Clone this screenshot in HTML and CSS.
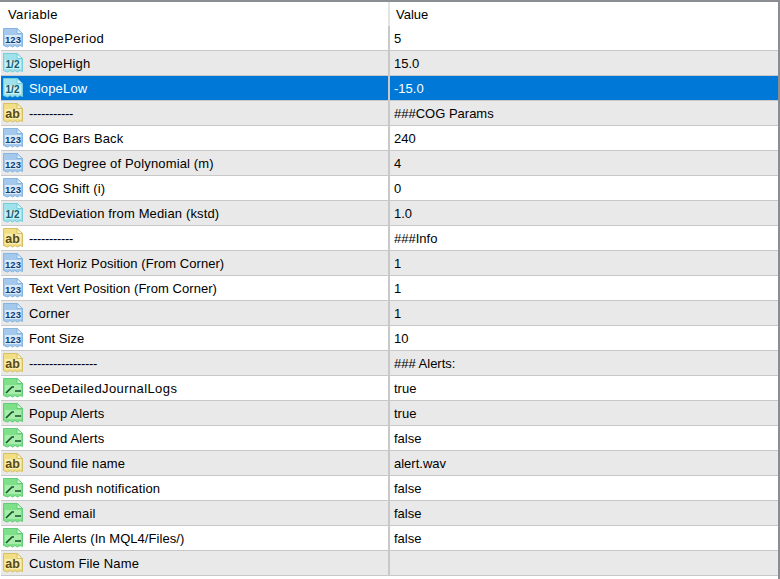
FILE: index.html
```html
<!DOCTYPE html>
<html lang="en">
<head>
<meta charset="utf-8">
<title>Inputs</title>
<link rel="stylesheet" href="styles.css">
</head>
<body>
<svg class="defs" width="0" height="0" aria-hidden="true">
  <defs>
    <symbol id="i-int" viewBox="0 0 22 22">
      <path d="M1.5 1.5H15L20.5 6.5V19.5L18 18.5L15.5 20L13 18.5L10.5 20L8 18.5L5.5 20L1.5 18.5Z" fill="#a4c9ec" stroke="#86b5e0"/>
      <path d="M15 1.5V6.5H20.5Z" fill="#e4f0fb" stroke="#86b5e0"/>
      <rect x="3" y="8" width="16" height="9" fill="#dbeaf8"/>
      <text x="11" y="16" class="glyph int">123</text>
    </symbol>
    <symbol id="i-dbl" viewBox="0 0 22 22">
      <path d="M1.5 1.5H15L20.5 6.5V19.5L18 18.5L15.5 20L13 18.5L10.5 20L8 18.5L5.5 20L1.5 18.5Z" fill="#a0e2ec" stroke="#76cddb"/>
      <path d="M15 1.5V6.5H20.5Z" fill="#e2f7fa" stroke="#76cddb"/>
      <rect x="3" y="8" width="16" height="9" fill="#c8f0f5"/>
      <text x="10.5" y="16" class="glyph dbl">1/2</text>
    </symbol>
    <symbol id="i-str" viewBox="0 0 22 22">
      <path d="M1.5 1.5H15L20.5 6.5V19.5L18 18.5L15.5 20L13 18.5L10.5 20L8 18.5L5.5 20L1.5 18.5Z" fill="#f1de85" stroke="#d6c064"/>
      <path d="M15 1.5V6.5H20.5Z" fill="#fbf4cf" stroke="#d6c064"/>
      <rect x="3" y="7" width="16" height="10" fill="#f8eeb4"/>
      <text x="10.5" y="16" class="glyph str">ab</text>
    </symbol>
    <symbol id="i-bool" viewBox="0 0 22 22">
      <path d="M1.5 1.5H15L20.5 6.5V19.5L18 18.5L15.5 20L13 18.5L10.5 20L8 18.5L5.5 20L1.5 18.5Z" fill="#7fe08a" stroke="#62cc78"/>
      <path d="M15 1.5V6.5H20.5Z" fill="#d7f7d7" stroke="#62cc78"/>
      <rect x="3" y="8" width="16" height="9" fill="#a6eda9"/>
      <path d="M4 16L10 10H12M13 14H19" fill="none" stroke="#14502c" stroke-width="1.7"/>
    </symbol>
  </defs>
</svg>
<main class="table">
  <div class="row head"><div class="cell name"><span class="label wide">Variable</span></div><div class="cell value">Value</div></div>
  <div class="row"><div class="cell name"><svg class="icon"><use href="#i-int"/></svg><span class="label wide">SlopePeriod</span></div><div class="cell value">5</div></div>
  <div class="row alt"><div class="cell name"><svg class="icon"><use href="#i-dbl"/></svg><span class="label">SlopeHigh</span></div><div class="cell value">15.0</div></div>
  <div class="row sel"><div class="cell name"><svg class="icon"><use href="#i-dbl"/></svg><span class="label">SlopeLow</span></div><div class="cell value">-15.0</div></div>
  <div class="row alt"><div class="cell name"><svg class="icon"><use href="#i-str"/></svg><span class="label dash">-----------</span></div><div class="cell value">###COG Params</div></div>
  <div class="row"><div class="cell name"><svg class="icon"><use href="#i-int"/></svg><span class="label">COG Bars Back</span></div><div class="cell value">240</div></div>
  <div class="row alt"><div class="cell name"><svg class="icon"><use href="#i-int"/></svg><span class="label">COG Degree of Polynomial (m)</span></div><div class="cell value">4</div></div>
  <div class="row"><div class="cell name"><svg class="icon"><use href="#i-int"/></svg><span class="label">COG Shift (i)</span></div><div class="cell value">0</div></div>
  <div class="row alt"><div class="cell name"><svg class="icon"><use href="#i-dbl"/></svg><span class="label">StdDeviation from Median (kstd)</span></div><div class="cell value">1.0</div></div>
  <div class="row"><div class="cell name"><svg class="icon"><use href="#i-str"/></svg><span class="label dash">-----------</span></div><div class="cell value">###Info</div></div>
  <div class="row alt"><div class="cell name"><svg class="icon"><use href="#i-int"/></svg><span class="label tight">Text Horiz Position (From Corner)</span></div><div class="cell value">1</div></div>
  <div class="row"><div class="cell name"><svg class="icon"><use href="#i-int"/></svg><span class="label tight">Text Vert Position (From Corner)</span></div><div class="cell value">1</div></div>
  <div class="row alt"><div class="cell name"><svg class="icon"><use href="#i-int"/></svg><span class="label">Corner</span></div><div class="cell value">1</div></div>
  <div class="row"><div class="cell name"><svg class="icon"><use href="#i-int"/></svg><span class="label tight">Font Size</span></div><div class="cell value">10</div></div>
  <div class="row alt"><div class="cell name"><svg class="icon"><use href="#i-str"/></svg><span class="label dash">-----------------</span></div><div class="cell value">### Alerts:</div></div>
  <div class="row"><div class="cell name"><svg class="icon"><use href="#i-bool"/></svg><span class="label wide">seeDetailedJournalLogs</span></div><div class="cell value">true</div></div>
  <div class="row alt"><div class="cell name"><svg class="icon"><use href="#i-bool"/></svg><span class="label">Popup Alerts</span></div><div class="cell value">true</div></div>
  <div class="row"><div class="cell name"><svg class="icon"><use href="#i-bool"/></svg><span class="label">Sound Alerts</span></div><div class="cell value">false</div></div>
  <div class="row alt"><div class="cell name"><svg class="icon"><use href="#i-str"/></svg><span class="label">Sound file name</span></div><div class="cell value">alert.wav</div></div>
  <div class="row"><div class="cell name"><svg class="icon"><use href="#i-bool"/></svg><span class="label">Send push notification</span></div><div class="cell value">false</div></div>
  <div class="row alt"><div class="cell name"><svg class="icon"><use href="#i-bool"/></svg><span class="label">Send email</span></div><div class="cell value">false</div></div>
  <div class="row"><div class="cell name"><svg class="icon"><use href="#i-bool"/></svg><span class="label tight">File Alerts (In MQL4/Files/)</span></div><div class="cell value">false</div></div>
  <div class="row alt"><div class="cell name"><svg class="icon"><use href="#i-str"/></svg><span class="label">Custom File Name</span></div><div class="cell value"></div></div>
</main>
</body>
</html>
```
FILE: styles.css
```css
* { box-sizing: border-box; }
html, body { margin: 0; height: 579px; overflow: hidden; background: #fff; }
body {
  font-family: "Liberation Sans", Arial, sans-serif;
  font-size: 13px;
  color: #000;
  border-top: 2px solid #8a8d92;
  border-right: 2px solid #8a8d92;
  padding-left: 1px;
}
.defs { position: absolute; }
.table { display: flex; flex-direction: column; }
.row {
  display: grid;
  grid-template-columns: 389px 1fr;
  height: 25px;
  border-bottom: 1px solid #c8c8c8;
  background: #fff;
}
.row.alt { background: #e9e9e9; }
.row.sel { background: #0078d7; color: #fff; }
.row.head { height: 24px; border-bottom: 0; }
.cell { display: flex; align-items: center; min-width: 0; white-space: nowrap; }
.name { border-right: 2px solid #c8c8c8; padding-left: 1px; }
.value { padding-left: 4px; }
.row.head .name { border-right-color: #e4e4e4; padding-left: 7px; }
.row.head .value { padding-left: 6px; }
.icon { width: 22px; height: 22px; flex: none; }
.label { margin-left: 5px; letter-spacing: 0.15px; }
.label.wide { letter-spacing: 0.4px; }
.label.tight { letter-spacing: 0.05px; }
.label.dash { letter-spacing: -0.33px; }
.row.head .label { margin-left: 0; }
.glyph { font-family: "Liberation Sans", Arial, sans-serif; font-weight: 700; text-anchor: middle; }
.glyph.int { fill: #0f3d78; font-size: 9.5px; }
.glyph.dbl { fill: #125a6b; font-size: 10px; }
.glyph.str { fill: #5a4a10; font-size: 12.5px; }
```
